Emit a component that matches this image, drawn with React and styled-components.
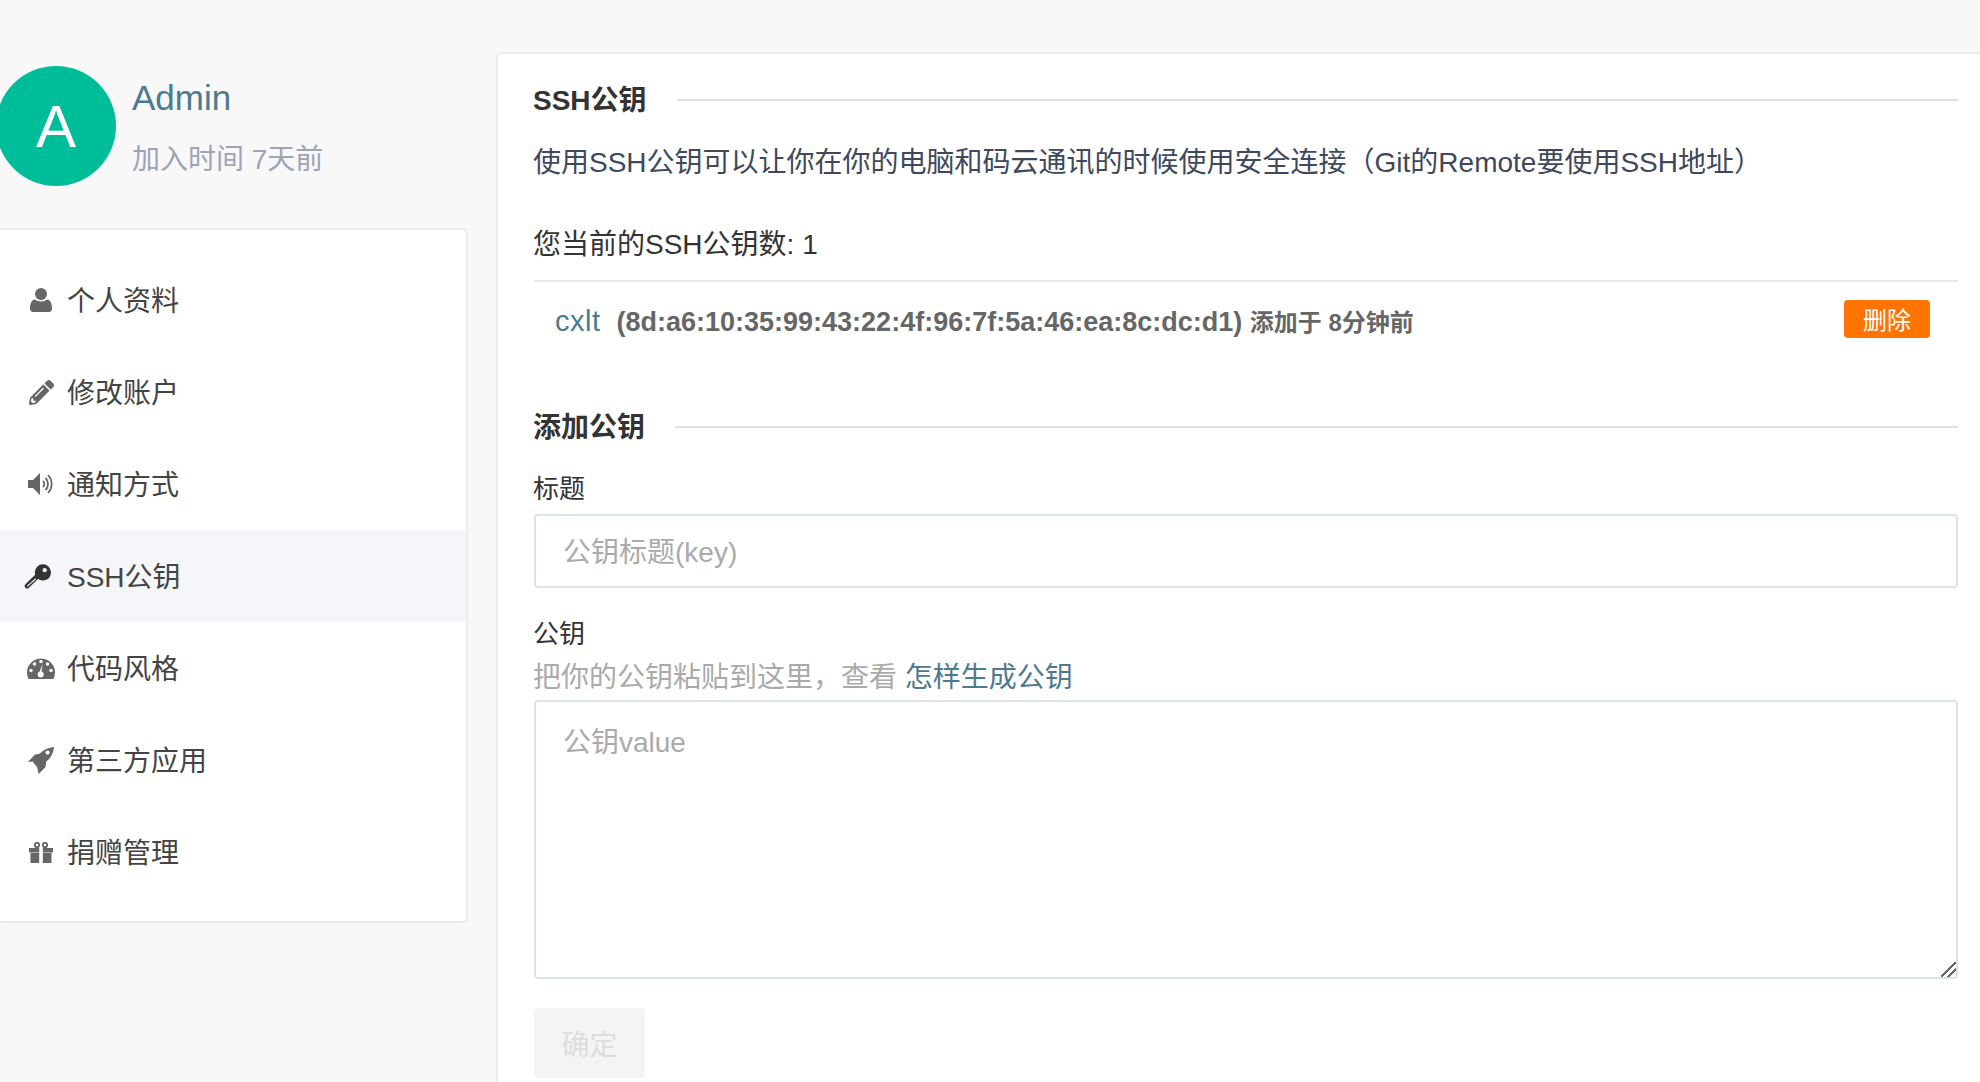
import styled, { createGlobalStyle } from "styled-components";
import { FaPencilAlt } from "react-icons/fa";

const GlobalStyle = createGlobalStyle`
  html, body {
    margin: 0;
    height: 100%;
    overflow: hidden;
    background: #f8f8f8;
  }
  body {
    font-family: "Liberation Sans", "Noto Sans CJK SC", sans-serif;
    color: #333;
  }
  * {
    box-sizing: border-box;
  }
`;

const Page = styled.div`
  display: flex;
  align-items: flex-start;
  gap: 28px;
  width: 1998px;
  height: 1082px;
  margin-left: -4px;
  overflow: hidden;
`;

const Sidebar = styled.aside`
  flex: 0 0 472px;
  padding-top: 66px;
`;

const Profile = styled.div`
  display: flex;
  gap: 16px;
`;

const Avatar = styled.div`
  display: grid;
  place-items: center;
  width: 120px;
  height: 120px;
  border-radius: 50%;
  background: #00bd9a;
  color: #fff;
  font-size: 60px;
`;

const ProfileText = styled.div`
  padding-top: 12px;
`;

const Name = styled.div`
  font-size: 35px;
  line-height: 40px;
  color: #4c7a8f;
`;

const Joined = styled.div`
  margin-top: 22px;
  font-size: 28px;
  line-height: 40px;
  color: #9ea4b5;
`;

const Card = styled.div`
  background: #fff;
  border: 2px solid #e8ecf0;
  border-radius: 6px;
`;

const Menu = styled(Card)`
  margin-top: 42px;
  padding: 24px 0 23px;
`;

const MenuItem = styled.div`
  display: flex;
  align-items: center;
  gap: 9px;
  height: 92px;
  padding-left: 26px;
  font-size: 28px;
  color: #444;
  background: ${(props) => (props.$active ? "#f5f6fa" : "transparent")};
`;

const MenuLabel = styled.span`
  padding-bottom: 2px;
`;

const MenuIcon = styled.span`
  display: flex;
  justify-content: center;
  width: 34px;
  color: ${(props) => (props.$active ? "#333" : "#666")};
  font-size: 25px;
`;

const Main = styled(Card)`
  flex: 1;
  margin-top: 52px;
  padding: 24px 34px 40px 36px;
  height: 1100px;
`;

const SectionTitle = styled.div`
  display: flex;
  align-items: center;
  gap: 30px;
  height: 40px;
  margin-top: ${(props) => props.$top || 0}px;
  margin-left: -1px;
  font-size: 28px;
  font-weight: 700;
  color: #333;
  &:after {
    content: "";
    flex: 1;
    height: 2px;
    margin-top: 3px;
    background: #e0e0e0;
  }
`;

const Description = styled.p`
  margin: 25px 0 0 -1px;
  font-size: 28px;
  line-height: 40px;
  color: #40485b;
`;

const KeyCount = styled.p`
  margin: 42px 0 0 -1px;
  font-size: 28px;
  line-height: 40px;
  color: #333;
`;

const KeyRow = styled.div`
  display: flex;
  align-items: flex-start;
  justify-content: space-between;
  margin-top: 15px;
  padding: 18px 28px 0 21px;
  border-top: 2px solid #e8e8e8;
`;

const KeyInfo = styled.div`
  display: flex;
  align-items: center;
  gap: 16px;
  height: 43px;
`;

const KeyName = styled.span`
  font-size: 29px;
  letter-spacing: 0.5px;
  color: #4c7a8f;
`;

const Fingerprint = styled.span`
  padding-bottom: 2px;
  font-size: 27px;
  font-weight: 700;
  color: #666;
`;

const AddedAt = styled.span`
  font-size: 24px;
`;

const DeleteButton = styled.button`
  width: 86px;
  height: 38px;
  padding: 0 0 2px;
  border: 0;
  border-radius: 4px;
  background: #ff7400;
  color: #fff;
  font: inherit;
  font-size: 24px;
`;

const Label = styled.label`
  display: block;
  margin-top: ${(props) => props.$top}px;
  margin-left: -1px;
  font-size: 26px;
  line-height: 36px;
  color: #333;
`;

const Help = styled.div`
  margin: 6px 0 0 -1px;
  font-size: 28px;
  line-height: 40px;
  color: #aaa;
`;

const HelpLink = styled.a`
  color: #4c7a8f;
`;

const fieldStyle = `
  display: block;
  width: 100%;
  border: 2px solid #dce3e8;
  border-radius: 4px;
  outline: none;
  background: #fff;
  font: inherit;
  font-size: 28px;
  line-height: 40px;
  color: #333;
  &::placeholder {
    color: #aaa;
    opacity: 1;
  }
`;

const TextInput = styled.input`
  ${fieldStyle}
  height: 74px;
  margin-top: 7px;
  padding: 3px 28px 0 27px;
`;

const TextArea = styled.textarea`
  ${fieldStyle}
  height: 279px;
  margin-top: 2px;
  padding: 21px 28px 20px 27px;
  resize: vertical;
  &::-webkit-resizer {
    background: linear-gradient(135deg, transparent 0 46%, #666 46% 55%, transparent 55% 70%, #666 70% 79%, transparent 79%);
  }
`;

const SubmitButton = styled.button`
  display: block;
  width: 111px;
  height: 70px;
  margin-top: 29px;
  padding: 0;
  border: 0;
  border-radius: 4px;
  background: #f4f4f4;
  color: #ddd;
  font: inherit;
  font-size: 28px;
`;

const KeySvg = styled.svg`
  margin-right: 7px;
`;

const UserIcon = () => (
  <svg width="22" height="24" viewBox="0 0 22 24" fill="currentColor">
    <circle cx="11" cy="6" r="6" />
    <path d="M0 20.500C0 16 1.500 11.500 5 11.500c1.500 1.200 3.500 2 6 2s4.500-.8 6-2c3.500 0 5 4.500 5 9 0 2-1.300 3.500-3 3.500H3c-1.700 0-3-1.500-3-3.500z" />
  </svg>
);

const SpeakerIcon = () => (
  <svg width="26" height="22" viewBox="0 0 26 22" fill="none" stroke="currentColor">
    <path d="M0 7h5l7-7v22l-7-7H0z" fill="currentColor" stroke="none" />
    <path d="M15 8a4 4 0 0 1 0 6" strokeWidth="1.800" />
    <path d="M17.500 5a8.500 8.500 0 0 1 0 12" strokeWidth="1.800" />
    <path d="M20 2a13 13 0 0 1 0 18" strokeWidth="1.800" />
  </svg>
);

const KeyIcon = () => (
  <KeySvg width="30" height="27" viewBox="0 0 30 27">
    <path d="M16 12L3.500 24" stroke="currentColor" strokeWidth="5.500" strokeLinecap="round" />
    <path d="M13 16L3.500 24.500" stroke="#f5f6fa" strokeWidth="1.200" />
    <circle cx="21" cy="9" r="9" fill="currentColor" />
    <circle cx="23" cy="6.500" r="2.400" fill="#f5f6fa" />
  </KeySvg>
);

const GaugeIcon = () => (
  <svg width="28" height="22" viewBox="0 0 28 22">
    <path d="M1.600 22A14 14 0 1 1 26.400 22z" fill="currentColor" />
    <g fill="#fff">
      <circle cx="14" cy="4.500" r="1.700" />
      <circle cx="7.500" cy="7" r="1.700" />
      <circle cx="20.500" cy="7" r="1.700" />
      <circle cx="4" cy="13.500" r="1.700" />
      <circle cx="24" cy="13.500" r="1.700" />
      <path d="M15.500 7l-1 8h-2z" />
      <circle cx="13.700" cy="17.500" r="3" />
    </g>
  </svg>
);

const RocketIcon = () => (
  <svg width="26" height="27" viewBox="0 0 27 28">
    <path d="M27 0C26.500 6 24 11 19 15L18 21 11 28 9.500 21 6.500 17.500 5 15 0 15.500 7 8 12 7C16 3 21 .5 27 0z" fill="currentColor" />
    <circle cx="20.300" cy="5.700" r="2.200" fill="#fff" />
  </svg>
);

const GiftIcon = () => (
  <svg width="24" height="21" viewBox="0 0 24 21">
    <circle cx="8" cy="3" r="2.200" fill="none" stroke="currentColor" strokeWidth="1.800" />
    <circle cx="16" cy="3" r="2.200" fill="none" stroke="currentColor" strokeWidth="1.800" />
    <path d="M0 6h24v4.500H0zM1.500 11h21v10h-21z" fill="currentColor" />
    <rect x="10.200" y="6" width="3.600" height="15" fill="#fff" />
  </svg>
);

const menu = [
  { label: "个人资料", icon: <UserIcon /> },
  { label: "修改账户", icon: <FaPencilAlt /> },
  { label: "通知方式", icon: <SpeakerIcon /> },
  { label: "SSH公钥", icon: <KeyIcon />, active: true },
  { label: "代码风格", icon: <GaugeIcon /> },
  { label: "第三方应用", icon: <RocketIcon /> },
  { label: "捐赠管理", icon: <GiftIcon /> },
];

export default function App() {
  return (
    <Page>
      <GlobalStyle />
      <Sidebar>
        <Profile>
          <Avatar>A</Avatar>
          <ProfileText>
            <Name>Admin</Name>
            <Joined>加入时间 7天前</Joined>
          </ProfileText>
        </Profile>
        <Menu>
          {menu.map((item) => (
            <MenuItem key={item.label} $active={item.active}>
              <MenuIcon $active={item.active}>{item.icon}</MenuIcon>
              <MenuLabel>{item.label}</MenuLabel>
            </MenuItem>
          ))}
        </Menu>
      </Sidebar>
      <Main>
        <SectionTitle>SSH公钥</SectionTitle>
        <Description>
          使用SSH公钥可以让你在你的电脑和码云通讯的时候使用安全连接（Git的Remote要使用SSH地址）
        </Description>
        <KeyCount>您当前的SSH公钥数: 1</KeyCount>
        <KeyRow>
          <KeyInfo>
            <KeyName>cxlt</KeyName>
            <Fingerprint>
              (8d:a6:10:35:99:43:22:4f:96:7f:5a:46:ea:8c:dc:d1) <AddedAt>添加于 8分钟前</AddedAt>
            </Fingerprint>
          </KeyInfo>
          <DeleteButton>删除</DeleteButton>
        </KeyRow>
        <SectionTitle $top={62}>添加公钥</SectionTitle>
        <Label $top={26}>标题</Label>
        <TextInput placeholder="公钥标题(key)" />
        <Label $top={28}>公钥</Label>
        <Help>
          把你的公钥粘贴到这里，查看 <HelpLink>怎样生成公钥</HelpLink>
        </Help>
        <TextArea placeholder="公钥value" />
        <SubmitButton disabled>确定</SubmitButton>
      </Main>
    </Page>
  );
}
